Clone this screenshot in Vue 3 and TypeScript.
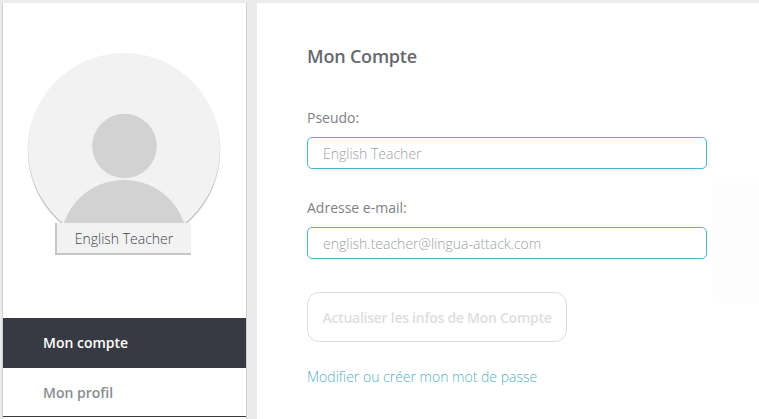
<script setup lang="ts">
import { ref } from "vue";

const pseudo = ref("English Teacher");
const email = ref("english.teacher@lingua-attack.com");
const active = ref("Mon compte");
const menu = ["Mon compte", "Mon profil"];
</script>

<template>
  <div class="page">
    <aside class="sidebar">
      <div class="avatar">
        <svg width="196" height="172" viewBox="0 0 196 172" aria-hidden="true">
          <defs>
            <clipPath id="avatar-clip">
              <circle cx="98" cy="96" r="96" />
            </clipPath>
          </defs>
          <circle cx="98" cy="97.6" r="96.2" fill="#bebebe" />
          <circle cx="98" cy="96" r="96" fill="#f2f2f2" />
          <g clip-path="url(#avatar-clip)" fill="#d2d2d2">
            <circle cx="98.5" cy="93" r="32.3" />
            <circle cx="98" cy="190.5" r="63.5" />
          </g>
        </svg>
        <div class="badge">English Teacher</div>
      </div>
      <nav class="menu">
        <a
          v-for="item in menu"
          :key="item"
          class="menu-item"
          :class="{ active: item === active }"
          >{{ item }}</a
        >
      </nav>
    </aside>

    <main class="content">
      <h1 class="title">Mon Compte</h1>
      <label class="field">
        <span class="label">Pseudo:</span>
        <input v-model="pseudo" class="input" type="text" />
      </label>
      <label class="field">
        <span class="label">Adresse e-mail:</span>
        <input v-model="email" class="input" type="text" />
      </label>
      <button class="save" type="button" disabled>Actualiser les infos de Mon Compte</button>
      <a class="link">Modifier ou créer mon mot de passe</a>
      <div class="ghost"></div>
    </main>
  </div>
</template>

<style scoped>
.page {
  display: flex;
  gap: 10px;
  width: 759px;
  height: 419px;
  padding: 3px 0 0 2px;
  box-sizing: border-box;
  overflow: hidden;
  background: #ebebeb;
  font-family: "Open Sans", "Liberation Sans", sans-serif;
}

.sidebar {
  display: flex;
  flex-direction: column;
  width: 245px;
  flex: none;
  box-sizing: border-box;
  background: #fff;
  border-left: 1px solid #d0d0d0;
  border-right: 1px solid #d0d0d0;
}

.avatar {
  display: flex;
  flex-direction: column;
  align-items: center;
  height: 315px;
  padding: 50px 3px 0 0;
  box-sizing: border-box;
}

.avatar svg {
  display: block;
  flex: none;
  margin-left: 2px;
}

.badge {
  width: 136px;
  height: 32px;
  flex: none;
  box-sizing: border-box;
  margin-top: -2px;
  position: relative;
  display: flex;
  align-items: center;
  justify-content: center;
  background: #f2f2f2;
  border-left: 2px solid #c6c6c6;
  border-bottom: 2px solid #c6c6c6;
  color: #44474e;
  font-size: 14px;
  font-weight: 300;
}

.menu {
  display: flex;
  flex-direction: column;
}

.menu-item {
  display: flex;
  align-items: center;
  height: 49px;
  padding-left: 40px;
  box-sizing: border-box;
  background: #fff;
  color: #8a8c91;
  font-size: 14px;
  font-weight: 600;
  border-bottom: 1px solid #373a42;
}

.menu-item.active {
  height: 50px;
  padding-bottom: 2px;
  background: #373a42;
  color: #fff;
  border-bottom: 0;
}

.content {
  position: relative;
  flex: 1;
  min-width: 0;
  display: flex;
  flex-direction: column;
  align-items: flex-start;
  padding: 0 0 0 50px;
  background: #fff;
}

.title {
  margin: 41px 0 0;
  color: #66686e;
  font-size: 18px;
  line-height: 25px;
  font-weight: 600;
  letter-spacing: -0.2px;
}

.field {
  display: flex;
  flex-direction: column;
  margin-top: 30px;
  margin-bottom: -1px;
}

.title + .field {
  margin-top: 39px;
}

.label {
  color: #7f8186;
  font-size: 14px;
  line-height: 19px;
  margin-bottom: 10px;
}

.input {
  width: 400px;
  height: 32px;
  box-sizing: border-box;
  padding: 0 15px;
  border: 1px solid #54b2c8;
  border-radius: 5px;
  outline: none;
  background: #fff;
  color: #a0a2a8;
  font-family: inherit;
  font-size: 14px;
  font-weight: 300;
}

.save {
  width: 260px;
  height: 50px;
  margin-top: 34px;
  padding: 0;
  box-sizing: border-box;
  border: 1px solid #dcdcdc;
  border-radius: 12px;
  background: #fff;
  color: #dedede;
  font-family: inherit;
  font-size: 14px;
  font-weight: 600;
  letter-spacing: -0.26px;
}

.link {
  margin-top: 25px;
  color: #58b1c8;
  font-size: 14px;
  line-height: 19px;
  font-weight: 300;
}

.ghost {
  position: absolute;
  right: 0;
  top: 180px;
  width: 46px;
  height: 120px;
  background: #fdfdfd;
}
</style>

<style>
html,
body {
  margin: 0;
  background: #ebebeb;
}
</style>
